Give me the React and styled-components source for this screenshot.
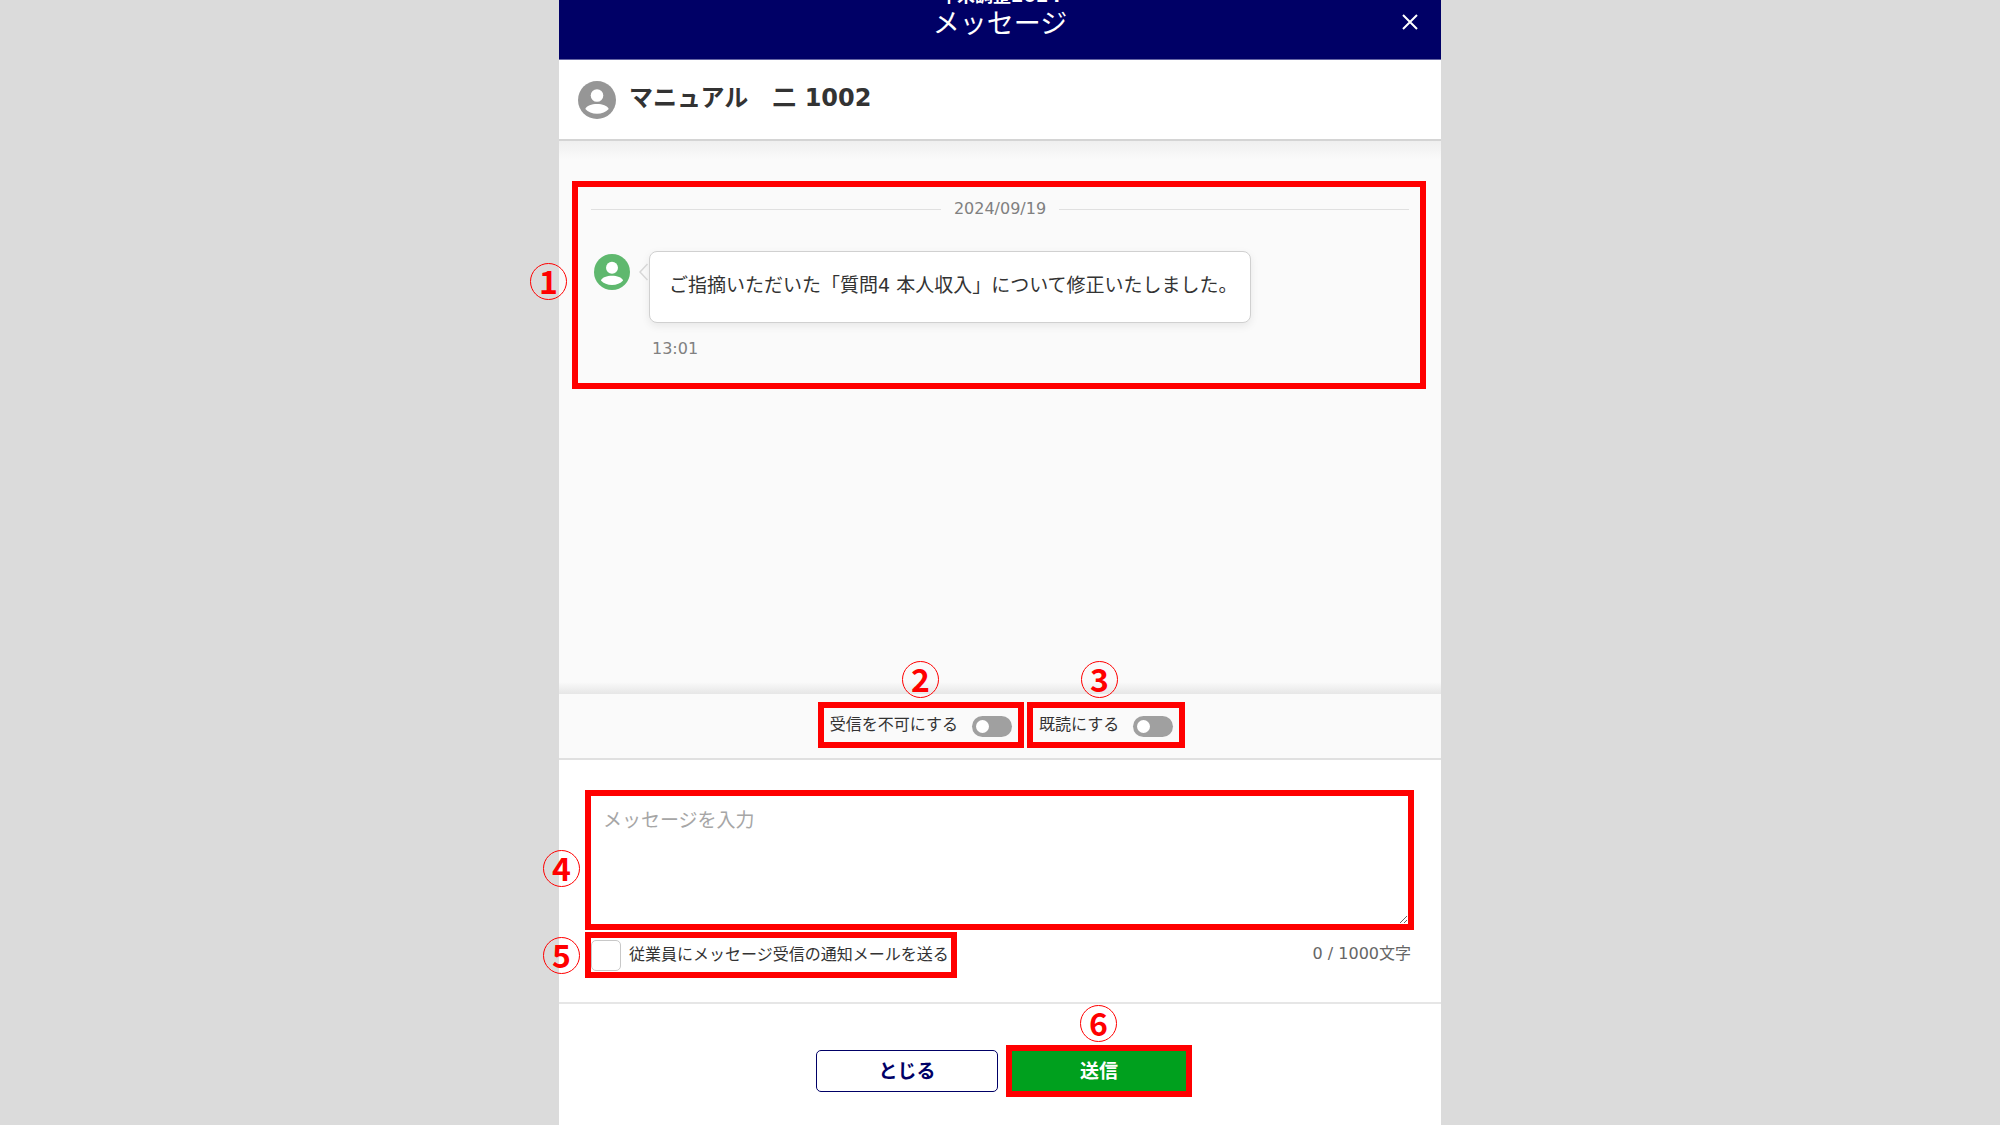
import React, { useState } from 'react';
import styled, { createGlobalStyle, ThemeProvider } from 'styled-components';

const theme = {
  colors: {
    navy: '#000066',
    green: '#00a01e',
    avatarGreen: '#5fb86e',
    gray: '#969696',
    line: '#e0e0e0',
    mark: '#ff0000',
    surface: '#ffffff',
    panel: '#fafafa',
    backdrop: '#dbdbdb',
    text: '#333333',
    muted: '#808080'
  },
  fontSize: {
    small: '16px',
    medium: '19px',
    large: '24px',
    title: '27px'
  }
};

const GlobalStyle = createGlobalStyle`
  * {
    box-sizing: border-box;
  }

  body {
    margin: 0;
    background: #dbdbdb;
    color: #333333;
    font-family: 'DejaVu Sans', 'Noto Sans CJK JP', sans-serif;
    font-size: 16px;
    line-height: 24px;
  }

  button, input, textarea {
    font-family: inherit;
  }
`;

const Backdrop = styled.div`
  display: flex;
  justify-content: center;
  min-height: 100vh;
  background: ${props => props.theme.colors.backdrop};
`;

const Dialog = styled.main`
  display: flex;
  flex-direction: column;
  width: 100%;
  max-width: 882px;
  background: ${props => props.theme.colors.surface};
`;

const Header = styled.header`
  position: relative;
  display: flex;
  flex-direction: column;
  justify-content: flex-end;
  height: 60px;
  padding-bottom: 18px;
  overflow: hidden;
  text-align: center;
  color: white;
  background: ${props => props.theme.colors.navy};
  border-bottom: 1px solid #6666a3;
`;

const AppName = styled.div`
  flex-shrink: 0;
  font-size: 18px;
  font-weight: 700;
  line-height: 22px;
`;

const Title = styled.h1`
  flex-shrink: 0;
  margin: 0;
  font-size: ${props => props.theme.fontSize.title};
  font-weight: 400;
  line-height: 34px;
`;

const CloseIconButton = styled.button`
  position: absolute;
  top: 10px;
  right: 19px;
  display: flex;
  padding: 4px;
  border: none;
  background: none;
  color: white;
  cursor: pointer;
`;

const Recipient = styled.section`
  display: flex;
  align-items: center;
  gap: 13px;
  padding: 20px 19px 19px;
`;

const RecipientName = styled.h2`
  margin: 0;
  padding-bottom: 4px;
  font-size: ${props => props.theme.fontSize.large};
  font-weight: 700;
  line-height: 36px;
`;

const Messages = styled.section`
  flex: 1;
  padding: 40px 15px 40px 13px;
  border-top: 2px solid #d4d4d4;
  background:
    linear-gradient(#efefef, rgba(250, 250, 250, 0)) top / 100% 18px no-repeat,
    linear-gradient(rgba(250, 250, 250, 0), #e6e6e6) bottom / 100% 12px no-repeat,
    ${props => props.theme.colors.panel};
`;

const Highlight = styled.div`
  position: relative;
  border: 6px solid ${props => props.theme.colors.mark};
`;

const Badge = styled.span`
  position: absolute;
  top: ${props => props.$top}px;
  left: ${props => props.$left}px;
  z-index: 2;
  display: flex;
  align-items: center;
  justify-content: center;
  width: 37px;
  height: 37px;
  padding-bottom: 4px;
  border: 1px solid ${props => props.theme.colors.mark};
  border-radius: 50%;
  color: ${props => props.theme.colors.mark};
  font-family: 'Noto Sans CJK JP', sans-serif;
  font-size: 32px;
  font-weight: 700;
  line-height: 32px;
`;

const Thread = styled(Highlight)`
  padding: 10px 11px 22px 13px;
`;

const DateDivider = styled.div`
  display: flex;
  align-items: center;
  gap: 13px;
  color: ${props => props.theme.colors.muted};

  &::before,
  &::after {
    content: '';
    flex: 1;
    height: 1px;
    background: ${props => props.theme.colors.line};
  }
`;

const Message = styled.article`
  display: flex;
  align-items: flex-start;
  gap: 19px;
  margin-top: 30px;
  padding-left: 3px;

  & > svg {
    margin-top: 3px;
  }
`;

const Bubble = styled.p`
  position: relative;
  margin: 0;
  padding: 19px 12px 23px 19px;
  border: 1px solid #d0d0d0;
  border-radius: 8px;
  background: white;
  box-shadow: 0 3px 8px rgba(0, 0, 0, 0.08);
  font-size: ${props => props.theme.fontSize.medium};
  line-height: 28px;
`;

const Tail = styled.svg`
  position: absolute;
  top: 11px;
  left: -11px;
`;

const Time = styled.time`
  display: block;
  margin-top: 14px;
  padding-left: 3px;
  color: ${props => props.theme.colors.muted};
`;

const Options = styled.section`
  display: flex;
  justify-content: center;
  gap: 3px;
  padding: 8px 0 10px 3px;
  border-bottom: 2px solid ${props => props.theme.colors.line};
  background: ${props => props.theme.colors.panel};
`;

const ToggleLabel = styled.label`
  display: flex;
  align-items: center;
  gap: 14px;
  height: 34px;
  padding: 0 6px;
  cursor: pointer;
`;

const Switch = styled.input`
  appearance: none;
  display: flex;
  align-items: center;
  width: 40px;
  height: 21px;
  margin: 2px 0 0;
  padding: 0 4px;
  border-radius: 11px;
  background: #a0a0a0;
  cursor: pointer;

  &::before {
    content: '';
    width: 13px;
    height: 13px;
    border-radius: 50%;
    background: white;
  }

  &:checked {
    justify-content: flex-end;
    background: ${props => props.theme.colors.green};
  }
`;

const Composer = styled.section`
  padding: 30px 27px 24px 26px;
  border-bottom: 2px solid #e6e6e6;
`;

const MessageInput = styled.textarea`
  display: block;
  width: 100%;
  height: 128px;
  padding: 10px 12px;
  border: none;
  outline: none;
  background: white;
  color: ${props => props.theme.colors.text};
  font-size: ${props => props.theme.fontSize.medium};
  line-height: 28px;
  resize: vertical;

  &::placeholder {
    color: #a6a6a6;
  }
`;

const ComposerFooter = styled.div`
  display: flex;
  justify-content: space-between;
  align-items: flex-start;
  margin-top: 2px;
`;

const CheckLabel = styled.label`
  display: flex;
  align-items: center;
  gap: 8px;
  height: 34px;
  padding-right: 2px;
  cursor: pointer;
`;

const CheckBox = styled.input`
  appearance: none;
  width: 30px;
  height: 31px;
  margin: 0;
  border: 1px solid #c8c8c8;
  border-radius: 5px;
  background: white;
  cursor: pointer;

  &:checked {
    background: ${props => props.theme.colors.green};
  }
`;

const Counter = styled.span`
  padding: 10px 3px;
  color: #666666;
`;

const Actions = styled.footer`
  display: flex;
  justify-content: center;
  align-items: center;
  gap: 8px;
  padding: 41px 0 28px 8px;
`;

const Button = styled.button`
  display: block;
  width: 182px;
  height: 42px;
  padding: 0;
  border: 1px solid ${props => props.theme.colors.navy};
  border-radius: 5px;
  background: white;
  color: ${props => props.theme.colors.navy};
  font-size: ${props => props.theme.fontSize.medium};
  font-weight: 700;
  line-height: 28px;
  cursor: pointer;
`;

const SendButton = styled(Button)`
  width: 174px;
  height: 40px;
  border: none;
  border-radius: 0;
  background: ${props => props.theme.colors.green};
  color: white;
`;

const Avatar = ({ size, color }) => (
  <svg width={size} height={size} viewBox="0 0 38 38" aria-hidden="true">
    <circle cx="19" cy="19" r="19" fill={color} />
    <circle cx="19" cy="14.5" r="6.3" fill="white" />
    <path d="M7.3 28C8.6 24.6 13.6 23 19 23s10.4 1.600 11.700 5C28 31.200 23.800 32.700 19 32.700S10 31.200 7.300 28z" fill="white" />
  </svg>
);

const Toggle = ({ label, number, badgeLeft }) => (
  <Highlight>
    <Badge $top={-47} $left={badgeLeft}>{number}</Badge>
    <ToggleLabel>
      {label}
      <Switch type="checkbox" role="switch" />
    </ToggleLabel>
  </Highlight>
);

export default function App() {
  const [message, setMessage] = useState('');

  return (
    <ThemeProvider theme={theme}>
      <GlobalStyle />
      <Backdrop>
        <Dialog>
          <Header>
            <AppName>年末調整2024</AppName>
            <Title>メッセージ</Title>
            <CloseIconButton type="button" aria-label="とじる">
              <svg width="16" height="16" viewBox="0 0 16 16" aria-hidden="true">
                <path d="M1 1l14 14M15 1L1 15" stroke="currentColor" strokeWidth="2" />
              </svg>
            </CloseIconButton>
          </Header>

          <Recipient>
            <Avatar size={38} color={theme.colors.gray} />
            <RecipientName>マニュアル　二 1002</RecipientName>
          </Recipient>

          <Messages>
            <Thread>
              <Badge $top={76} $left={-48}>1</Badge>
              <DateDivider>2024/09/19</DateDivider>
              <Message>
                <Avatar size={36} color={theme.colors.avatarGreen} />
                <div>
                  <Bubble>
                    <Tail width="9" height="18" viewBox="0 0 9 18" aria-hidden="true">
                      <path d="M8.500 1L1 9l7.500 8" fill="none" stroke="#d6d6d6" strokeWidth="1.500" />
                    </Tail>
                    ご指摘いただいた「質問4 本人収入」について修正いたしました。
                  </Bubble>
                  <Time>13:01</Time>
                </div>
              </Message>
            </Thread>
          </Messages>

          <Options>
            <Toggle label="受信を不可にする" number={2} badgeLeft={78} />
            <Toggle label="既読にする" number={3} badgeLeft={48} />
          </Options>

          <Composer>
            <Highlight>
              <Badge $top={54} $left={-48}>4</Badge>
              <MessageInput
                aria-label="メッセージ"
                placeholder="メッセージを入力"
                maxLength={1000}
                value={message}
                onChange={(e) => setMessage(e.target.value)}
              />
            </Highlight>
            <ComposerFooter>
              <Highlight>
                <Badge $top={-1} $left={-48}>5</Badge>
                <CheckLabel>
                  <CheckBox type="checkbox" />
                  従業員にメッセージ受信の通知メールを送る
                </CheckLabel>
              </Highlight>
              <Counter>{message.length} / 1000文字</Counter>
            </ComposerFooter>
          </Composer>

          <Actions>
            <Button type="button">とじる</Button>
            <Highlight>
              <Badge $top={-46} $left={68}>6</Badge>
              <SendButton type="button">送信</SendButton>
            </Highlight>
          </Actions>
        </Dialog>
      </Backdrop>
    </ThemeProvider>
  );
}
